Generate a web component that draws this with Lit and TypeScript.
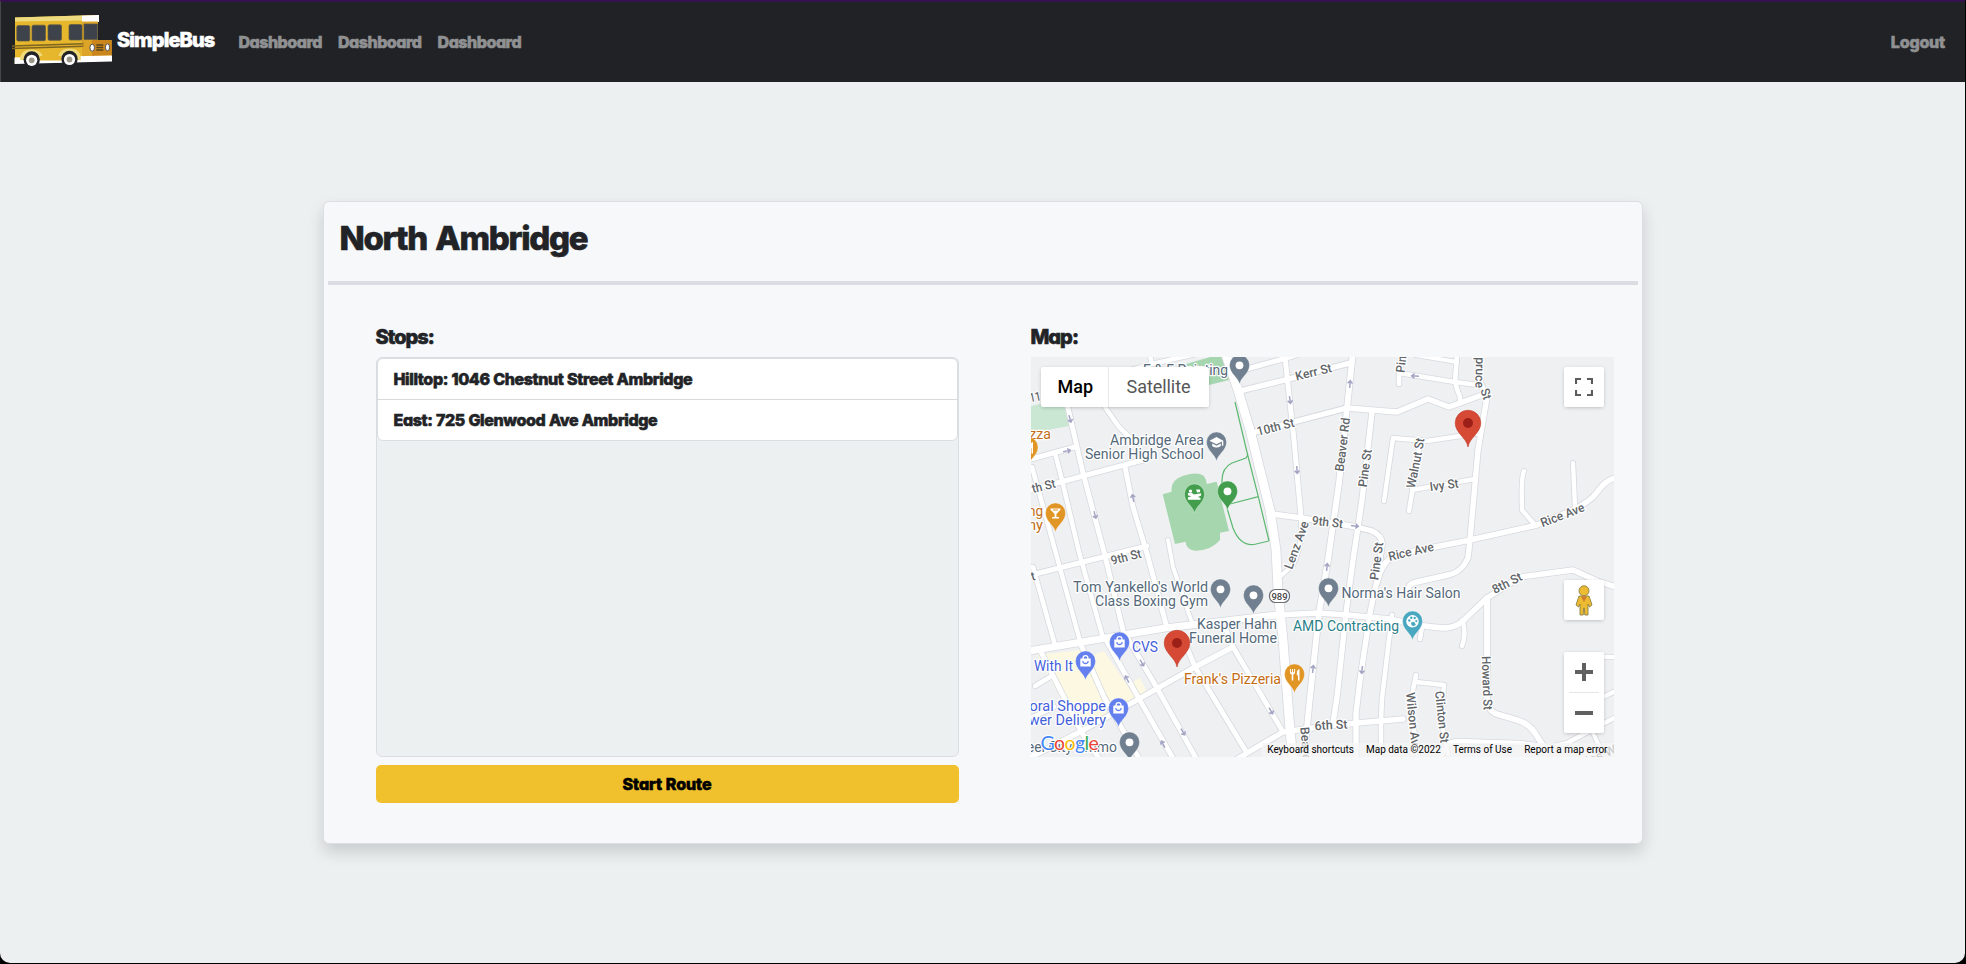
import { LitElement, html, svg, css } from "lit";
import { customElement } from "lit/decorators.js";

type Road = [width: number, d: string];

const ROADS: Road[] = [
  // west side grid above 8th St
  [4.6, "M1033 567L1055 645"],
  [4.6, "M1032 467L1055 550L1080 641"],
  [4.6, "M1055 453L1062 480L1079 552L1103 638"],
  [5, "M1060 372L1068 408L1083 473L1104 552L1124 634"],
  [5, "M1125 467L1133 507L1148 557L1167 628"],
  [4, "M1168 540L1173 567L1190 617L1194 626"],
  [4.6, "M1105 407L1114 420Q1120 430 1137 443"],
  [5, "M1031 459L1075 447"],
  [5, "M1031 490L1057 483L1143 460"],
  [5, "M1031 575L1107 556L1147 546"],
  [4.6, "M1110 376L1152 364L1226 347"],
  [4.6, "M1152 364L1150 355"],
  // grid below 8th St
  [5, "M1040 650L1082 733L1100 760"],
  [5, "M1081 645L1104 697L1140 760"],
  [5, "M1105 638L1138 697L1174 760"],
  [5, "M1127 637L1157 688L1197 760"],
  [5, "M1188 650L1195 667L1247 753"],
  [5, "M1226 630L1233 647L1283 732"],
  [5.4, "M1029 758L1078 733L1137 700L1195 667L1233 647"],
  [4.6, "M1035 686L1050 677"],
  [4.6, "M1031 718L1054 707"],
  [5.4, "M1236 760L1247 753L1283 732L1320 727L1357 723L1403 719"],
  // north-east streets
  [5, "M1285 357L1294 440L1301 517"],
  [4, "M1301 517Q1303 545 1293 565L1282 575"],
  [5.4, "M1272 514L1302 518L1357 527L1372 531Q1383 536 1382 545L1377 580L1370 613L1360 680L1356 713L1356 760"],
  [5.8, "M1353 352L1347 408L1339 483L1328 560L1319 613L1310 697L1306 737L1304 760"],
  [5.4, "M1372 412L1362 500L1353 560L1346 613L1337 697L1333 723"],
  [4.6, "M1392 615L1382 698L1381 720L1381 760"],
  [5.4, "M1240 391L1297 377L1350 363"],
  [5, "M1243 370L1283 359L1312 350"],
  [5.4, "M1252 433L1320 415L1347 408L1397 412L1428 399L1449 407L1460 403L1482 395"],
  [5.4, "M1478 352L1479 380L1487 397L1478 450L1470 540L1468 558L1464 565Q1458 573 1448 575L1417 582Q1410 583 1408 588"],
  [4.6, "M1399 384L1399 373L1455 382L1478 385"],
  [4.6, "M1399 373L1404 354"],
  [4.6, "M1457 354L1455 382L1458 392Q1461 397 1460 403"],
  [4, "M1415 355L1457 362"],
  [4.4, "M1384 501L1393 438L1427 441L1480 433"],
  [4.6, "M1420 442L1415 475L1409 511"],
  [4.6, "M1412 490L1475 479"],
  [5.4, "M1377 583Q1383 557 1400 554L1435 547L1470 540L1537 525L1573 510Q1585 504 1593 497L1603 485Q1609 479 1616 478"],
  [4.4, "M1524 471Q1521 476 1522 510L1535 525"],
  [4.4, "M1573 463L1575 507"],
  // 8th St
  [7, "M1029 651L1165 628L1277 615"],
  [5.4, "M1277 615L1318 613L1347 615L1390 619Q1428 628 1447 628Q1460 626 1467 617L1487 598L1520 577L1573 570L1597 581L1616 587"],
  [4.6, "M1420 639L1422 626"],
  [4.4, "M1462 646Q1467 632 1462 620"],
  [5.8, "M1487 598L1487 653L1487 703Q1490 713 1500 715L1517 720Q1528 723 1535 733L1544 747"],
  [4.6, "M1416 675L1413 690L1411 710L1418 757"],
  [4.6, "M1416 682L1444 685L1441 720L1448 754"],
  [4.4, "M1440 760Q1445 741 1458 741L1520 743L1550 747L1567 743L1616 717"],
  [4, "M1593 733L1601 750"],
  [4.4, "M1603 697L1616 691"],
  [4.4, "M1603 657L1616 657"],
  // Route 989
  [8.8, "M1225 352L1238 390L1250 430L1270 510L1276 550L1278 590L1283 640L1290 730L1293 760"],
];

const ARROWS: [number, number, number][] = [
  [1070, 419, 165], [1067, 451, 78], [1095, 515, 165], [1133, 498, -12],
  [1290, 400, 172], [1297, 470, 176], [1350, 384, 4], [1415, 376, -86],
  [1355, 526, 98], [1327, 567, 6], [1313, 669, 6], [1362, 670, 186],
  [1142, 663, 150], [1127, 679, -28], [1183, 732, 150], [1163, 744, -28], [1271, 711, 150],
];

const STREETS: [string, number, number, number, number][] = [
  // text, centre x, centre y, rotation, length
  ["11", 1035, 397, -12, 11],
  ["th St", 1043.5, 486, -14, 24],
  ["10th St", 1275.5, 427, -14, 38],
  ["Kerr St", 1313.5, 372, -14, 37],
  ["9th St", 1126, 557, -14, 31],
  ["9th St", 1327.5, 522, 7, 31],
  ["Lenz Ave", 1296.5, 545, -70, 50],
  ["Beaver Rd", 1342.5, 444.5, -83, 54],
  ["Pine St", 1365, 468, -82, 38],
  ["Pine St", 1376.5, 561, -82, 38],
  ["Walnut St", 1415.5, 463, -79, 51],
  ["Ivy St", 1444, 485, -7, 29],
  ["Pine", 1401.5, 361, -84, 23],
  ["Rice Ave", 1411, 551.5, -13, 46],
  ["Rice Ave", 1562.5, 515, -21, 46],
  ["8th St", 1507, 583, -27, 32],
  ["Howard St", 1487, 683, 88, 54],
  ["Wilson Av", 1413, 719, 84, 53],
  ["Clinton St", 1442, 717, 84, 52],
  ["6th St", 1331, 725, -3, 33],
  ["Beaver", 1306, 746, 86, 38],
  ["Spruce", 1480, 369, 91, 38],
  ["St", 1486, 394, 72, 11],
  ["t", 1033, 576, -14, 4],
  ["los W", 1601, 755, -24, 32],
];

const PLACES: [string, number, number, number, string][] = [
  // text, right x, baseline y, length, kind
  ["E & E Painting", 1228, 375, 85, "gray"],
  ["Ambridge Area", 1204, 445, 94, "gray"],
  ["Senior High School", 1204, 459, 119, "gray"],
  ["Tom Yankello's World", 1208, 592, 135, "gray"],
  ["Class Boxing Gym", 1208, 606, 113, "gray"],
  ["Kasper Hahn", 1277, 629, 80, "gray"],
  ["Funeral Home", 1277, 643, 88, "gray"],
  ["Norma's Hair Salon", 1460.5, 598, 119, "gray"],
  ["Steel City Ammo", 1117, 752, 103, "gray"],
  ["AMD Contracting", 1399, 631, 106, "teal"],
  ["Frank's Pizzeria", 1281, 684, 97, "orange"],
  ["Pizza", 1051, 439, 34, "orange"],
  ["ng", 1043, 516, 15, "orange"],
  ["ny", 1043, 530, 15, "orange"],
  ["CVS", 1158, 652, 26, "blue"],
  ["With It", 1073, 671, 39, "blue"],
  ["Floral Shoppe", 1106, 711, 88, "blue"],
  ["Flower Delivery", 1106, 725, 97, "blue"],
];

const PINS: [number, number, string, string][] = [
  [1239.5, 384, "#708090", "dot"], [1216.5, 461, "#708090", "school"],
  [1194.5, 513, "#429e4c", "stadium"], [1227.5, 510, "#429e4c", "dot"],
  [1055.5, 532, "#e09524", "bar"], [1028, 466, "#e09524", "food"],
  [1220.5, 608, "#708090", "dot"], [1253.5, 614, "#708090", "dot"],
  [1328.5, 607, "#708090", "dot"], [1412.5, 640, "#49a7bf", "palette"],
  [1119.5, 661, "#6480ee", "shop"], [1085.5, 680, "#6480ee", "shop"],
  [1118.5, 727, "#6480ee", "shop"], [1129.5, 761, "#708090", "dot"],
  [1294.5, 693, "#e09524", "food"],
];

const GLYPHS: Record<string, unknown> = {
  dot: svg`<circle r="3.9" fill="#fff"/>`,
  school: svg`<path d="M0-5.2L-7-1.6L0 2L5.4-.8V3.4H6.8V-1.6ZM-4.3 1.2V3.6Q0 7 4.3 3.6V1.2L0 3.5Z" fill="#fff"/>`,
  stadium: svg`<circle cx="-4" cy="-3.2" r="1.7" fill="#fff"/><path d="M-6.6-1.2L-3-1.5L-.5.3L6.6-1V1.2L3.5 2.8L6 3.6V5.4H-6.6V3L-3.2 2.2L-6.6 1ZM1.6-4.8H5.6V-2.4L2.6-1.8Z" fill="#fff"/>`,
  bar: svg`<path d="M-5-4.8H5V-3.6L.9.8V3.8H3.4V5.2H-3.4V3.8H-.9V.8L-5-3.6Z" fill="#fff"/><path d="M-2.6-3.3H2.6" stroke="#e09524" stroke-width="1"/>`,
  food: svg`<path d="M-4.6-5.2V-2Q-4.6 0-2.8.3V6.2H-1.2V.3Q.6 0 .6-2V-5.2H-.4V-2H-1.5V-5.2H-2.5V-2H-3.6V-5.2ZM5-5.4Q2.3-4.6 2.3-1.4V1H3.5V6.2H5Z" fill="#fff"/>`,
  palette: svg`<circle r="6.2" fill="#fff"/><g fill="#49a7bf"><circle cx="-3.2" cy="-.8" r="1.2"/><circle cx="-1.2" cy="-3.6" r="1.2"/><circle cx="2.2" cy="-3.3" r="1.2"/><circle cx="3.8" cy="-.2" r="1.1"/><path d="M-1.5 1.2L1.6.4L3.4 3.4L1 5L-1 4Z"/></g>`,
  shop: svg`<path d="M-2.4-2.4V-3.4Q-2.4-5.7 0-5.7Q2.4-5.7 2.4-3.4V-2.4" fill="none" stroke="#fff" stroke-width="1.4"/><path d="M-5.2-2.8H5.2V5.2H-5.2Z" fill="#fff"/><path d="M-2.6-.4Q-2.6 2.2 0 2.2Q2.6 2.2 2.6-.4" fill="none" stroke="#6480ee" stroke-width="1.3"/>`,
};

@customElement("bus-logo")
class BusLogo extends LitElement {
  static styles = css`
    :host { display: block; width: 102px; height: 56px; }
    svg { display: block; }
  `;
  render() {
    return html`<svg width="102" height="56" viewBox="11 12 102 56">
      <path d="M15 17.5L98 15V40H111.5V60L15 62Z" fill="#e6b62c" />
      <path d="M82 21L98 20.5V40H111.5V55L86 56Z" fill="#ca8a20" />
      <path d="M82 15.4L99 15V22H82Z" fill="#fff" />
      <path d="M15 17.5L82 15.5V20.5L15 21.5Z" fill="#eedb80" />
      <path d="M82 21.5H98V40H92V57H82Z" fill="#dda528" />
      <path d="M92 40H111.5V55.5L92 56Z" fill="#cb851d" />
      <g fill="#3e424a" stroke="#5d5a48" stroke-width=".7">
        <rect x="16.8" y="25.5" width="13" height="15.5" rx="1.5" />
        <rect x="32" y="25.2" width="13.5" height="15.5" rx="1.5" />
        <rect x="48" y="24.8" width="13.5" height="15.5" rx="1.5" />
        <rect x="69" y="24.5" width="13" height="15.5" rx="1.5" />
        <path d="M84 24H97.5V39.5H84Z" />
      </g>
      <path d="M12 46L83.5 43.8M12 48.6L83.5 46.2" stroke="#7d6420" stroke-width="1.5" fill="none" />
      <path d="M82.8 24V47" stroke="#b98d22" stroke-width=".8" />
      <path d="M14.5 57.5L112 55.5V61.5L14.5 64Z" fill="#fff" />
      <path d="M20 60Q20 49.5 31.5 49.5Q43 49.5 43 60Z" fill="#f0d978" />
      <path d="M58 60Q58 48.5 69.5 48.5Q81 48.5 81 60Z" fill="#f0d978" />
      <path d="M40 56H61V61H40Z" fill="#e6b62c" />
      <path d="M39 60.500H61V62.500H39Z" fill="#fff" />
      <circle cx="31.7" cy="59.5" r="8.2" fill="#222326" />
      <circle cx="69.5" cy="59" r="8.2" fill="#222326" />
      <circle cx="31.7" cy="60.3" r="5.6" fill="#fff" /><circle cx="31.7" cy="60.3" r="2.9" fill="#9b9789" />
      <circle cx="69.5" cy="59.5" r="5.6" fill="#fff" /><circle cx="69.5" cy="59.5" r="2.9" fill="#9b9789" />
      <path d="M96.3 45H103.3M96.3 47.5H103.3M96.3 50H103.3" stroke="#54431e" stroke-width="1.4" />
      <ellipse cx="92.2" cy="47.7" rx="2.3" ry="3.5" fill="#fff" stroke="#4e4e50" stroke-width="1" />
      <ellipse cx="107.5" cy="47.3" rx="2.1" ry="3.5" fill="#fff" stroke="#4e4e50" stroke-width="1" />
    </svg>`;
  }
}

@customElement("route-map")
class RouteMap extends LitElement {
  static styles = css`
    :host { display: block; position: relative; width: 583px; height: 400px; overflow: hidden; background: #eff0f2; font-family: Roboto, sans-serif; font-weight: 400; -webkit-text-stroke: 0; }
    .canvas { display: block; }
    .street { font: 500 12.5px Roboto, sans-serif; fill: #616569; stroke: #fff; stroke-width: 2.4px; stroke-linejoin: round; paint-order: stroke; text-anchor: middle; }
    .place { font: 400 14.3px Roboto, sans-serif; stroke: #fff; stroke-width: 2.4px; stroke-linejoin: round; paint-order: stroke; text-anchor: end; }
    .gray { fill: #54697a; }
    .teal { fill: #2b8089; }
    .orange { fill: #c36c14; }
    .blue { fill: #435edb; }
    .shield { font: 500 9.5px Roboto, sans-serif; fill: #444; text-anchor: middle; }
    .panel { position: absolute; background: #fff; border-radius: 2px; box-shadow: 0 1px 4px -1px rgba(0, 0, 0, .3); }
    .types { left: 10px; top: 10px; display: flex; height: 40px; font-size: 18px; line-height: 40px; }
    .type { box-sizing: border-box; padding: 0 0 0 18px; color: #565656; }
    .type.on { width: 68px; color: #000; font-weight: 500; border-right: 1px solid #e8e8e8; padding: 0 0 0 17px; }
    .type.off { width: 100px; letter-spacing: -.05px; }
    .square { right: 10px; width: 40px; height: 40px; display: grid; place-items: center; }
    .full { top: 10px; }
    .pegman { top: 223px; }
    .zoom { right: 10px; top: 295px; width: 40px; height: 81px; display: flex; flex-direction: column; align-items: center; }
    .zoom svg { display: block; margin: 11px 0; }
    .line { width: 30px; height: 1px; background: #e6e6e6; }
    .legal { position: absolute; right: 0; bottom: 0; display: flex; gap: 12.2px; height: 14px; padding: 0 6px 0 5px; background: rgba(245, 245, 245, .72); color: #000; font-size: 10px; line-height: 14px; white-space: nowrap; letter-spacing: -.01px; }
    .google { position: absolute; left: 10px; bottom: 2px; font: 400 19.5px/24px Lato, sans-serif; letter-spacing: -.6px; -webkit-text-stroke: 2px #fff; paint-order: stroke; }
    .b { color: #4285f4; } .r { color: #ea4335; } .y { color: #fbbc05; } .g { color: #34a853; }
  `;
  render() {
    return html`
      <svg class="canvas" width="583" height="400" viewBox="1031 357 583 400">
        <path d="M1031 406L1063 399L1069 426L1031 433Z" fill="#cae7d3" />
        <path d="M1186 364L1224 353L1229 380L1205 386Z" fill="#a6d6af" />
        <g fill="#fcf8e1">
          <path d="M1037 655L1080 650L1102 699L1107 713L1078 729Z" />
          <path d="M1086 657L1104 651L1136 698L1110 712Z" />
          <path d="M1131 683L1140 678L1147 692L1139 697Z" />
        </g>
        <path d="M1162.7 494.3L1171.7 491.7Q1170 480 1184 475.500Q1203 470 1206 480L1206.700 484L1216.700 481.700L1229 531L1220 532.700L1220 540Q1212 550 1196 550.700Q1186 550 1185.500 541.700L1175 544Z" fill="#a5d6ad" />
        <g fill="none" stroke="#d7d9df" stroke-linecap="round" stroke-linejoin="round">
          ${ROADS.map(([w, d]) => svg`<path d=${d} stroke-width=${w + 1.6} />`)}
        </g>
        <g fill="none" stroke="#fff" stroke-linecap="round" stroke-linejoin="round">
          ${ROADS.map(([w, d]) => svg`<path d=${d} stroke-width=${w} />`)}
        </g>
        <path d="M1235 402L1247.700 455L1258.300 496.700L1269 541M1247.700 455L1246 458L1232 463Q1221 468 1222 484M1258.300 496.700L1230 504M1227 508L1233 528Q1240 546 1254 544.500L1269 541" fill="none" stroke="#5db870" stroke-width="1.200" />
        <g fill="none" stroke="#a3a4c4" stroke-width="1.500">
          ${ARROWS.map(([x, y, r]) => svg`<path d="M0 4V-3M-2.400 -.600L0 -3.300L2.400 -.600" transform="translate(${x} ${y}) rotate(${r})" />`)}
        </g>
        ${STREETS.map(([t, x, y, r, l]) => svg`<text class="street" y="4.300" textLength=${l} lengthAdjust="spacingAndGlyphs" transform="translate(${x} ${y}) rotate(${r})">${t}</text>`)}
        <rect x="1269.500" y="589.500" width="20" height="13" rx="6" fill="#fff" stroke="#6b6f73" stroke-width="1.200" />
        <text class="shield" x="1279.500" y="599.500">989</text>
        ${PLACES.map(([t, x, y, l, k]) => svg`<text class="place ${k}" x=${x} y=${y} textLength=${l} lengthAdjust="spacingAndGlyphs">${t}</text>`)}
        ${PINS.map(([x, y, c, g]) => svg`<g transform="translate(${x} ${y})">
          <path d="M0 0C-1.500 -7 -10 -10.500 -10 -19A10 10 0 0 1 10 -19C10 -10.500 1.500 -7 0 0Z" fill=${c} stroke="#fff" stroke-opacity=".6" stroke-width=".5" />
          <g transform="translate(0 -18.700)">${GLYPHS[g]}</g>
        </g>`)}
        ${[[1468, 447], [1177, 667]].map(([x, y]) => svg`<g transform="translate(${x} ${y})">
          <path d="M0 0C-1.300 -9 -12.800 -14 -12.800 -24A12.800 12.800 0 0 1 12.800 -24C12.800 -14 1.300 -9 0 0Z" fill="#d64a35" stroke="#c13a28" stroke-width=".6" />
          <circle cy="-24" r="5" fill="#9c2018" />
        </g>`)}
      </svg>
      <div class="google"><span class="b">G</span><span class="r">o</span><span class="y">o</span><span class="b">g</span><span class="g">l</span><span class="r">e</span></div>
      <div class="panel types"><div class="type on">Map</div><div class="type off">Satellite</div></div>
      <div class="panel square full">
        <svg width="18" height="18" viewBox="0 0 18 18"><path d="M1 6V1H6M12 1H17V6M17 12V17H12M6 17H1V12" fill="none" stroke="#5c5c5c" stroke-width="2.200" /></svg>
      </div>
      <div class="panel square pegman">
        <svg width="18" height="31" viewBox="0 0 18 31">
          <path d="M4 11H14L17 20L14.500 22L13 19L13 30H9.800L9.300 23H8.700L8.200 30H5V19L3.500 22L1 20Z" fill="#edbb31" stroke="#8d8047" stroke-width=".9" />
          <path d="M6 11.500H12L9 17Z" fill="#cf7a2c" />
          <circle cx="9" cy="5.800" r="5" fill="#edbb31" stroke="#8d8047" stroke-width=".9" />
        </svg>
      </div>
      <div class="panel zoom">
        <svg width="18" height="18" viewBox="0 0 18 18"><path d="M9 0V18M0 9H18" stroke="#606060" stroke-width="4" /></svg>
        <div class="line"></div>
        <svg width="18" height="18" viewBox="0 0 18 18"><path d="M0 9H18" stroke="#606060" stroke-width="4" /></svg>
      </div>
      <div class="legal"><span>Keyboard shortcuts</span><span>Map data ©2022</span><span>Terms of Use</span><span>Report a map error</span></div>
    `;
  }
}

@customElement("app-root")
class AppRoot extends LitElement {
  static styles = css`
    :host { display: block; height: 964px; background: #000; }
    .window { box-sizing: border-box; width: 1965px; height: 963px; overflow: hidden; border-radius: 0 0 10px 10px; background: #ecf0f1; color: #212326; font: 800 16px/24px Inter, sans-serif; font-feature-settings: "cv11"; -webkit-text-stroke: .6px currentColor; }
    .nav { box-sizing: border-box; display: flex; align-items: center; height: 82px; padding: 0 20px 0 10px; border-top: 2px solid #35124f; border-left: 1px solid #44464a; background: #212225; color: #909193; }
    bus-logo { margin-top: -4px; }
    .brand { margin: -5px 24px 0 4px; color: #fff; font-size: 20px; letter-spacing: -.88px; }
    .links { display: flex; gap: 16px; flex: 1; margin-top: -1px; }
    .link { letter-spacing: -.48px; }
    .out { margin-top: -1px; letter-spacing: -.2px; }
    .main { display: flex; justify-content: center; padding-top: 119px; }
    .card { box-sizing: border-box; width: 1320px; height: 643px; padding: 0 4px; border: 1px solid #dcdfe1; border-radius: 6px; background: #f7f8fa; box-shadow: 0 8px 16px rgba(0, 0, 0, .15); }
    .head { box-sizing: border-box; height: 83px; padding: 15px 11px 0 12px; border-bottom: 4px solid #dadde2; }
    .title { margin: 0; font: inherit; font-size: 33px; line-height: 42px; letter-spacing: -1.3px; word-spacing: 2.5px; }
    .cols { display: flex; gap: 72px; padding: 39px 47px 0 48px; }
    .col { width: 583px; }
    .label { margin: 0 0 7px; font: inherit; font-size: 20px; line-height: 26px; letter-spacing: -1px; }
    .list { box-sizing: border-box; height: 400px; border: 1px solid #dadde2; border-radius: 6px; background: #ecf0f1; }
    .items { margin: 0; padding: 0; list-style: none; border: 1px solid #dadde2; border-radius: 6px; background: #fff; }
    .item { padding: 8px 16px; letter-spacing: -.38px; word-spacing: .4px; }
    .item + .item { border-top: 1px solid #d8dadc; }
    .start { display: block; width: 583px; height: 38px; margin-top: 8px; border: 0; border-radius: 5px; background: #f0c12d; color: #000; font: inherit; font-feature-settings: inherit; letter-spacing: -.1px; word-spacing: .5px; }
  `;
  stops = ["Hilltop: 1046 Chestnut Street Ambridge", "East: 725 Glenwood Ave Ambridge"];
  render() {
    return html`<div class="window">
      <nav class="nav">
        <bus-logo></bus-logo>
        <div class="brand">SimpleBus</div>
        <div class="links">${[1, 2, 3].map(() => html`<span class="link">Dashboard</span>`)}</div>
        <span class="out">Logout</span>
      </nav>
      <main class="main">
        <section class="card">
          <header class="head"><h1 class="title">North Ambridge</h1></header>
          <div class="cols">
            <div class="col">
              <h2 class="label">Stops:</h2>
              <div class="list"><ul class="items">${this.stops.map((s) => html`<li class="item">${s}</li>`)}</ul></div>
              <button class="start">Start Route</button>
            </div>
            <div class="col">
              <h2 class="label">Map:</h2>
              <route-map></route-map>
            </div>
          </div>
        </section>
      </main>
    </div>`;
  }
}
